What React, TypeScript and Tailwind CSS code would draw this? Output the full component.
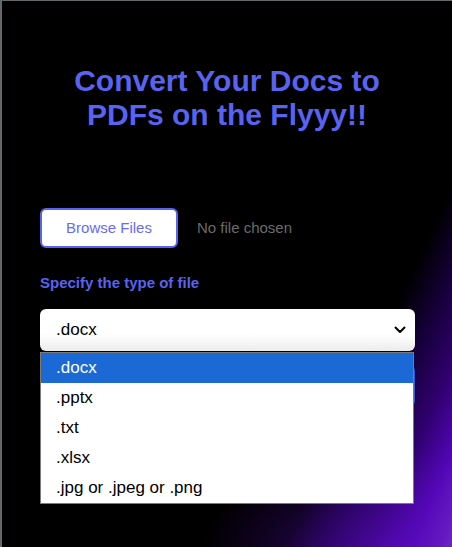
import React from "react";

export default function App() {
  const options = [".docx", ".pptx", ".txt", ".xlsx", ".jpg or .jpeg or .png"];
  return (
    <div
      className="w-[452px] h-[547px] overflow-hidden border-l-2 border-t border-[#63686d] bg-[radial-gradient(ellipse_200px_100px_at_400px_550px,rgba(90,12,190,0.6),transparent),linear-gradient(115deg,#000_76%,#16003a_82%,#30006e_88%,#5206b6_94%,#6c22c2_98%,#7c3cc8_100%)]"
      style={{ fontFamily: '"Liberation Sans", Arial, sans-serif' }}
    >
      <div className="pt-[63px] flex flex-col">
        <h1 className="text-center text-[30px] leading-[34px] font-bold text-[#5a62f0]">
          Convert Your Docs to
          <br />
          PDFs on the Flyyy!!
        </h1>

        <div className="mt-[76px] pl-[38px] w-[413px] flex flex-col">
          <div className="flex items-center">
            <button className="w-[138px] h-[40px] bg-white border-2 border-[#5a62f0] rounded-[6px] text-[15px] text-[#6a6cf0]">
              Browse Files
            </button>
            <span className="ml-[19px] text-[15px] text-[#6b6b6b]">No file chosen</span>
          </div>

          <div className="mt-[26px] text-[15px] leading-[17px] font-bold text-[#5a62f0]">
            Specify the type of file
          </div>

          <div className="relative mt-[18px]">
            <div className="h-[42px] rounded-[6px] bg-[linear-gradient(#fff_60%,#ececec_100%)] flex items-center justify-between pl-[16px] pr-[8px] text-[17px] text-black">
              <span>.docx</span>
              <svg width="12" height="8" viewBox="0 0 12 8" className="mr-[1px]">
                <path d="M1.5 1.5 L6 6 L10.5 1.5" fill="none" stroke="#000" strokeWidth="2" strokeLinecap="round" strokeLinejoin="round" />
              </svg>
            </div>

            <button className="mt-[14px] w-full h-[42px] rounded-[6px] bg-[#3a56c8] text-white text-[16px]">
              Convert
            </button>

            <div className="absolute left-0 top-[43px] w-[374px] bg-white border border-[#7a7a7a] flex flex-col">
              {options.map((o, i) => (
                <div
                  key={o}
                  className={
                    i === 0
                      ? "h-[30px] pl-[15px] flex items-center text-[17px] bg-[#1b69d4] text-white"
                      : "h-[30px] pl-[15px] flex items-center text-[17px] text-black"
                  }
                >
                  {o}
                </div>
              ))}
            </div>
          </div>
        </div>
      </div>
    </div>
  );
}
